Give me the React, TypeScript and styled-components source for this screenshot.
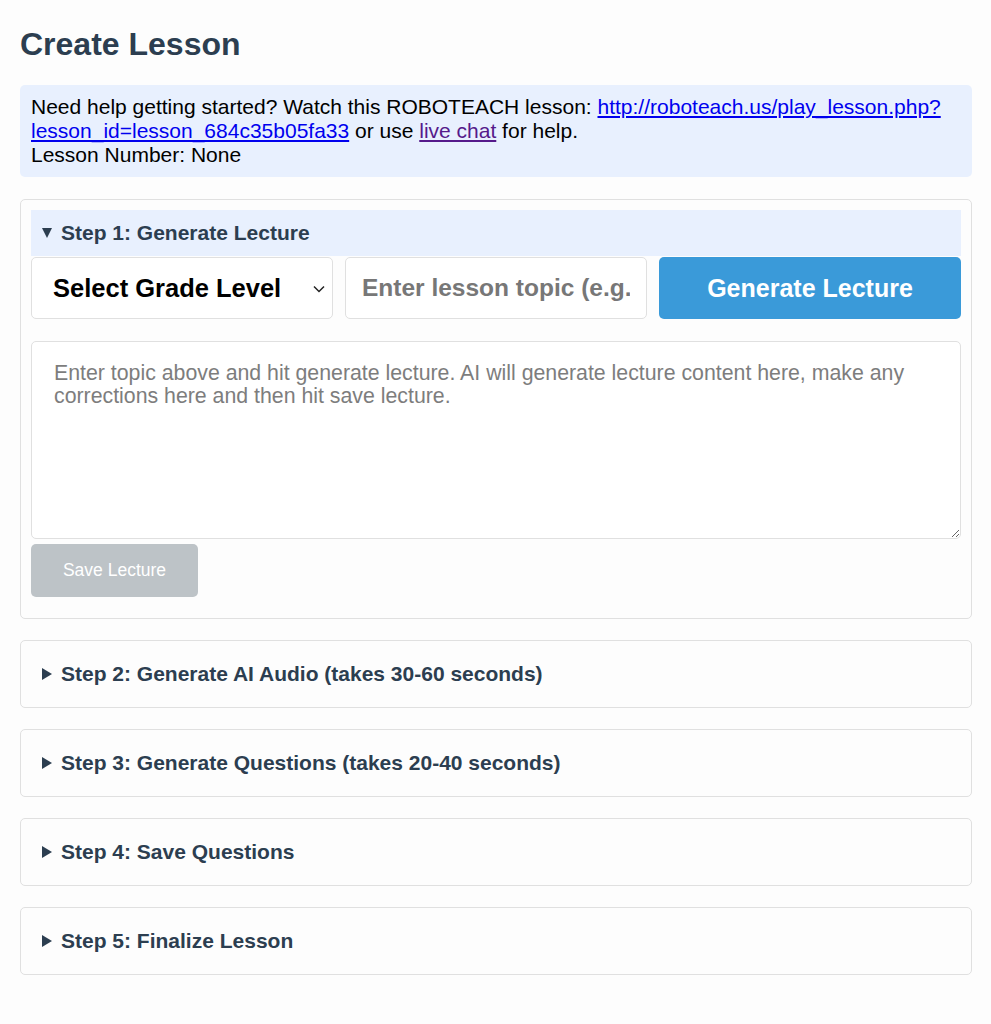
import React from "react";
import styled, { createGlobalStyle } from "styled-components";

const GlobalStyle = createGlobalStyle`
  html, body {
    margin: 0;
    padding: 0;
    background: #fdfdfd;
    font-family: "Liberation Sans", Arial, Helvetica, sans-serif;
    color: #000;
  }
  * { box-sizing: border-box; }
`;

const steps = [
  "Step 2: Generate AI Audio (takes 30-60 seconds)",
  "Step 3: Generate Questions (takes 20-40 seconds)",
  "Step 4: Save Questions",
  "Step 5: Finalize Lesson",
];

const App = () => {
  return (
    <Page>
      <GlobalStyle />
      <Title>Create Lesson</Title>
      <Info>
        Need help getting started? Watch this ROBOTEACH lesson:{" "}
        <Link href="#">
          http://roboteach.us/play_lesson.php?
          <wbr />
          lesson_id=lesson_684c35b05fa33
        </Link>{" "}
        or use <Link href="#" $visited>live chat</Link> for help.
        <br />
        Lesson Number: None
      </Info>

      <Card open>
        <Summary $open>
          <Marker $open />
          Step 1: Generate Lecture
        </Summary>
        <Body>
          <InputRow>
            <SelectWrap>
              <GradeSelect defaultValue="">
                <option value="">Select Grade Level</option>
                <option value="k">Kindergarten</option>
                <option value="1">Grade 1</option>
                <option value="2">Grade 2</option>
              </GradeSelect>
              <Chevron width="12" height="8" viewBox="0 0 12 8">
                <path d="M1 1.5 L6 6.5 L11 1.5" fill="none" stroke="#222" strokeWidth="1.5" />
              </Chevron>
            </SelectWrap>
            <TopicInput placeholder="Enter lesson topic (e.g., Photosynthesis)" />
            <PrimaryButton>Generate Lecture</PrimaryButton>
          </InputRow>
          <LectureText placeholder="Enter topic above and hit generate lecture. AI will generate lecture content here, make any corrections here and then hit save lecture." />
          <SaveButton disabled>Save Lecture</SaveButton>
        </Body>
      </Card>

      {steps.map((s) => (
        <Card key={s}>
          <Summary>
            <Marker />
            {s}
          </Summary>
        </Card>
      ))}
    </Page>
  );
};

export default App;

const Page = styled.div`
  padding: 0 19px 30px 20px;
`;

const Title = styled.h1`
  margin: 26px 0 22px;
  font-size: 32px;
  line-height: 37px;
  font-weight: 700;
  color: #2c3e50;
`;

const Info = styled.div`
  background: #e8f0fe;
  border-radius: 5px;
  padding: 10px 11px;
  font-size: 21px;
  line-height: 24px;
  margin-bottom: 22px;
`;

const Link = styled.a<{ $visited?: boolean }>`
  color: ${(p) => (p.$visited ? "#551a8b" : "#0000ee")};
  text-decoration: underline;
`;

const Card = styled.details`
  border: 1px solid #e0e0e0;
  border-radius: 5px;
  padding: 10px;
  margin-bottom: 21px;
  background: #fdfdfd;
`;

const Summary = styled.summary<{ $open?: boolean }>`
  list-style: none;
  display: flex;
  align-items: center;
  height: 46px;
  padding: 0 11px;
  font-size: 21px;
  font-weight: 700;
  color: #2c3e50;
  background: ${(p) => (p.$open ? "#e8f0fe" : "transparent")};
  cursor: pointer;
  &::-webkit-details-marker { display: none; }
`;

const Marker = styled.span<{ $open?: boolean }>`
  display: inline-block;
  flex: none;
  width: 0;
  height: 0;
  margin-right: 9px;
  ${(p) =>
    p.$open
      ? `border-left: 5.5px solid transparent;
         border-right: 5.5px solid transparent;
         border-top: 10px solid #2c3e50;`
      : `border-top: 6px solid transparent;
         border-bottom: 6px solid transparent;
         border-left: 10px solid #2c3e50;`}
`;

const Body = styled.div`
  padding-bottom: 11px;
`;

const InputRow = styled.div`
  display: grid;
  grid-template-columns: 1fr 1fr 1fr;
  gap: 12px;
  margin-top: 1px;
`;

const SelectWrap = styled.div`
  position: relative;
`;

const GradeSelect = styled.select`
  appearance: none;
  width: 100%;
  height: 62px;
  padding: 0 40px 0 21px;
  font-family: inherit;
  font-size: 25.5px;
  font-weight: 700;
  color: #000;
  background: #fff;
  border: 1px solid #e0e0e0;
  border-radius: 5px;
`;

const Chevron = styled.svg`
  position: absolute;
  right: 8px;
  top: 28px;
  pointer-events: none;
`;

const TopicInput = styled.input`
  height: 62px;
  width: 100%;
  padding: 0 16px;
  font-family: inherit;
  font-size: 24.5px;
  font-weight: 700;
  background: #fff;
  border: 1px solid #e0e0e0;
  border-radius: 5px;
  &::placeholder { color: #777; }
`;

const PrimaryButton = styled.button`
  height: 62px;
  border: none;
  border-radius: 5px;
  background: #3a9ad9;
  color: #fff;
  font-family: inherit;
  font-size: 25px;
  font-weight: 700;
`;

const LectureText = styled.textarea`
  display: block;
  width: 100%;
  height: 198px;
  margin-top: 22px;
  padding: 20px 22px;
  font-family: inherit;
  font-size: 21.3px;
  line-height: 23px;
  background: #fff;
  border: 1px solid #e0e0e0;
  border-radius: 5px;
  &::placeholder { color: #7d7d7d; }
`;

const SaveButton = styled.button`
  display: block;
  margin-top: 5px;
  width: 167px;
  height: 53px;
  border: none;
  border-radius: 5px;
  background: #bdc3c7;
  color: #fff;
  font-family: inherit;
  font-size: 17.5px;
`;
